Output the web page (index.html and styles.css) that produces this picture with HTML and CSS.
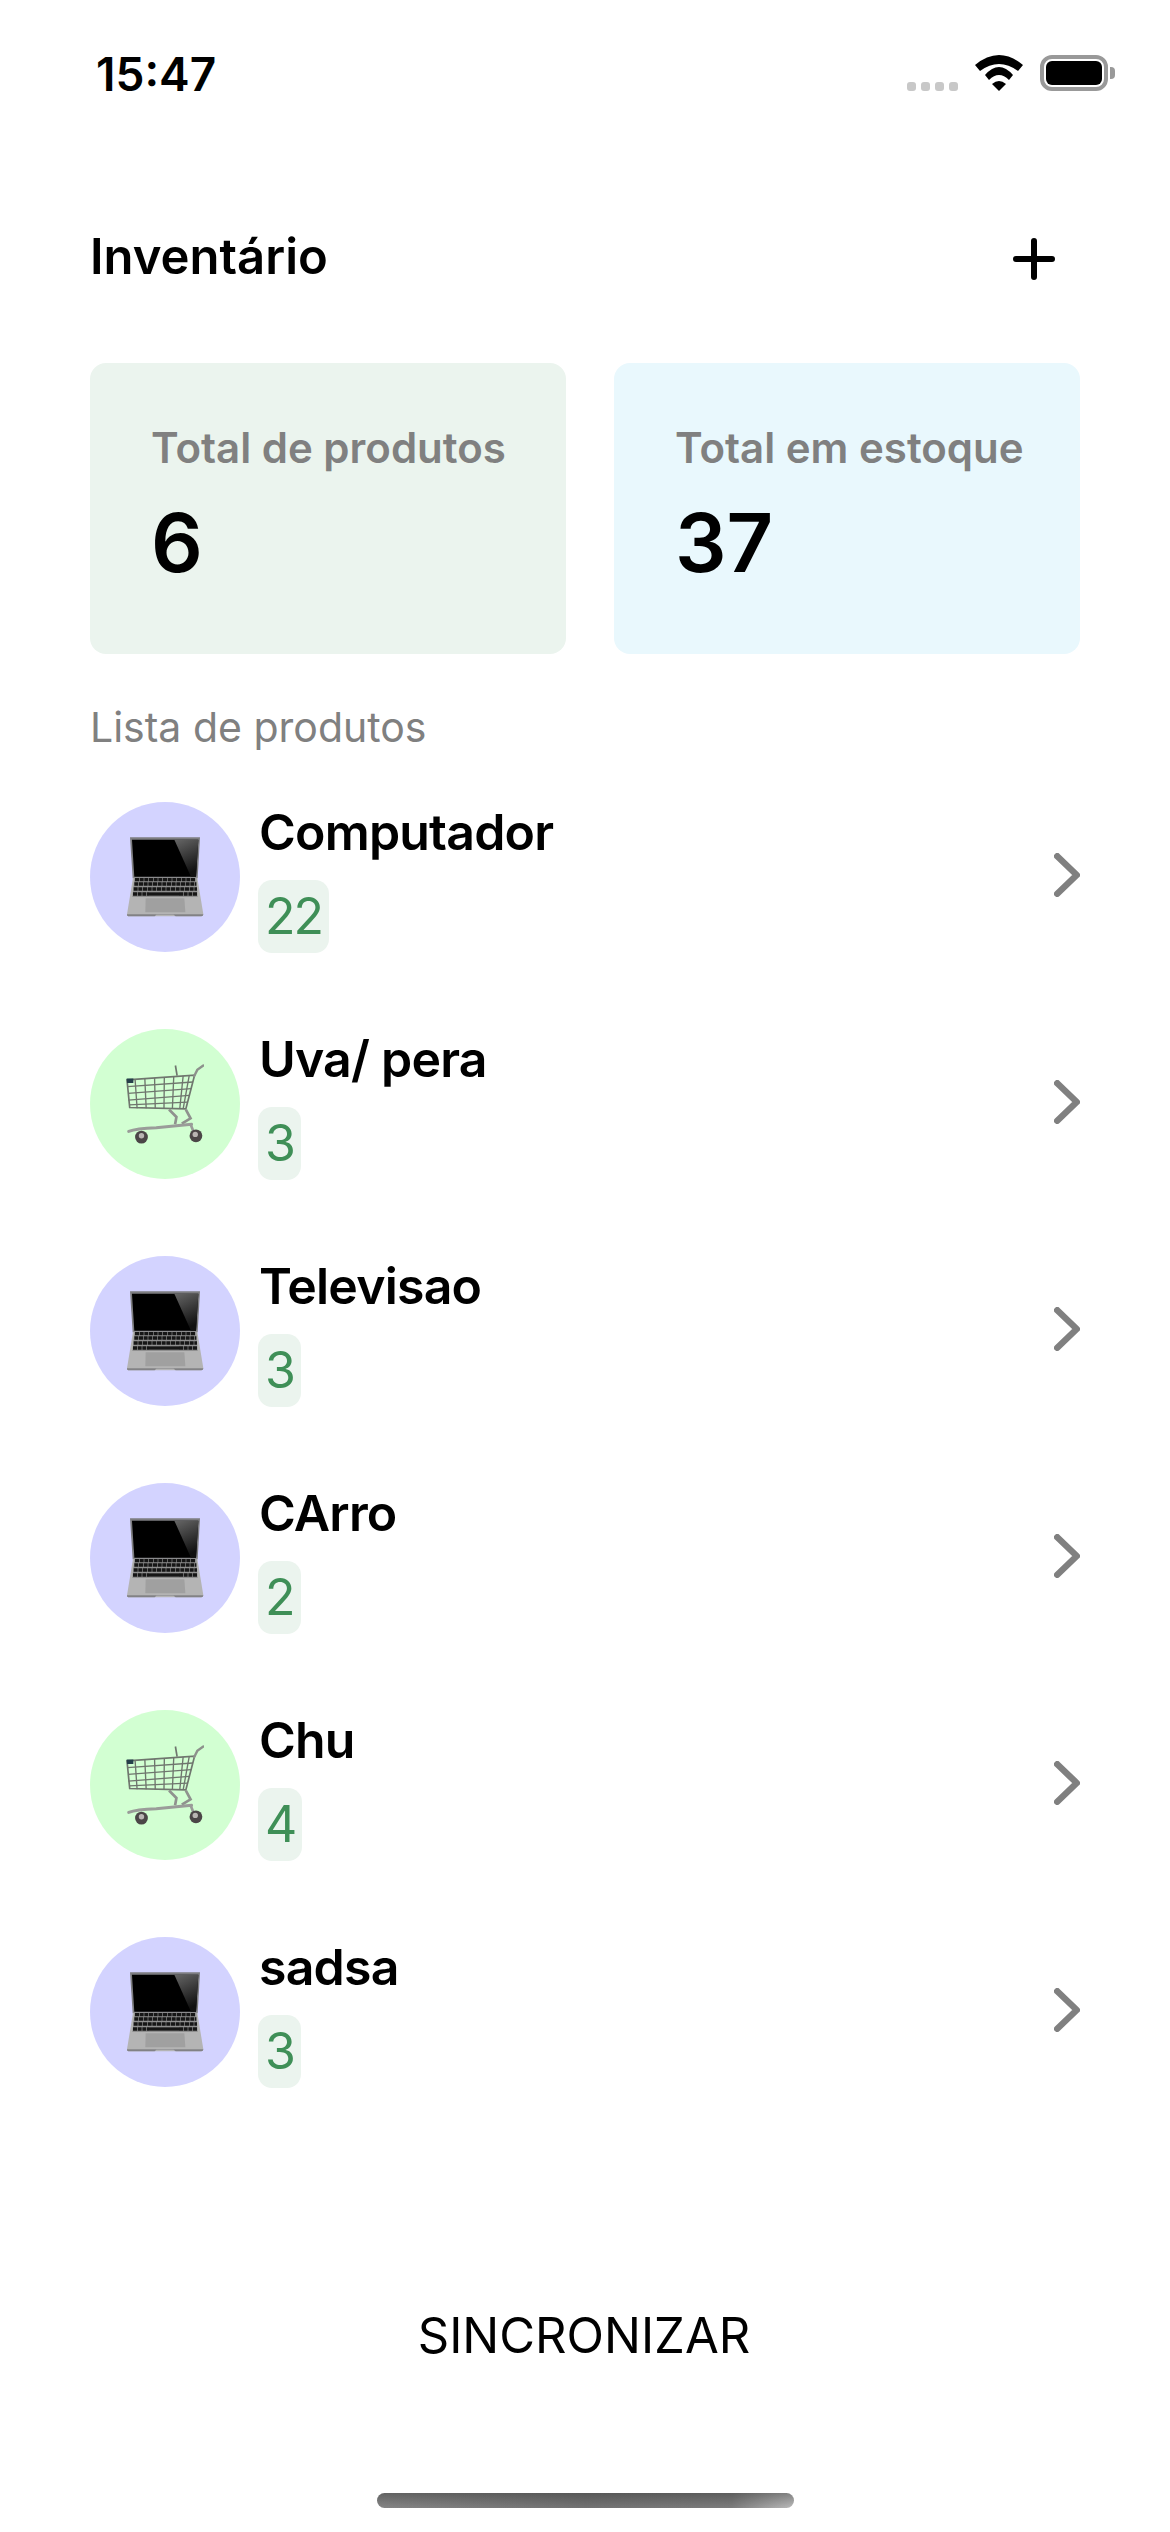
FILE: index.html
```html
<!DOCTYPE html>
<html lang="pt">
<head>
  <meta charset="UTF-8">
  <meta name="viewport" content="width=device-width, initial-scale=1.0">
  <title>Inventário</title>
  <link rel="stylesheet" href="styles.css">
</head>
<body>
  <!-- desenhos reutilizados nas linhas -->
  <svg class="defs" aria-hidden="true">
    <defs>
      <linearGradient id="glare" x1="0" y1="0" x2="0.3" y2="1">
        <stop offset="0" stop-color="#666"/>
        <stop offset="1" stop-color="#111"/>
      </linearGradient>
      <symbol id="laptop" viewBox="0 0 232 240">
        <path d="M11 1H221L214 124H19Z" fill="#7d7d80"/>
        <path d="M17 8H216L209 119H24Z" fill="#000"/>
        <path d="M144 8H216L209 119H194Z" fill="url(#glare)"/>
        <path d="M20 122H213L231 232Q231 238 225 238H9Q1 238 2 232Z" fill="#b4b4b4"/>
        <path d="M2 232Q1 238 9 238H85L90 233H142L148 238H225Q231 238 231 232Z" fill="#828285"/>
        <path d="M24 122H210L214 180H18Z" fill="#8f8f8f"/>
        <path d="M26 128H208M24 141H210M22 156H212" fill="none" stroke="#161616" stroke-width="10" stroke-dasharray="12 2"/>
        <path d="M20 171H68M158 171H214" fill="none" stroke="#161616" stroke-width="10" stroke-dasharray="12 2"/>
        <path d="M68 171H158" fill="none" stroke="#161616" stroke-width="10"/>
        <path d="M58 184H174L177 226H57Z" fill="#a0a0a0"/>
      </symbol>
      <symbol id="cart" viewBox="0 0 232 235">
        <g fill="none" stroke="#6f766e" stroke-width="4">
          <path d="M3 46L204 32L178 132L11 128Z" stroke-width="5"/>
          <path d="M4 66L199 52M6 86L194 72M7 106L188 92M9 120L183 112"/>
          <path d="M27 44L33 130M56 42L60 130M85 40L87 130M114 38L113 131M142 36L138 131M170 34L160 131M188 33L170 132"/>
          <path d="M203 34L212 16L230 3" stroke="#8d918c" stroke-width="7" stroke-linecap="round"/>
          <path d="M147 3L152 33" stroke-width="5"/>
          <path d="M128 134L150 156L146 178M178 134L192 160L166 176" stroke="#8f928e" stroke-width="8"/>
          <path d="M8 199Q30 190 90 188L195 178" stroke="#9a9c99" stroke-width="9" stroke-linecap="round"/>
          <path d="M192 178L200 198" stroke="#9a9c99" stroke-width="8"/>
        </g>
        <path d="M2 42H22V55H3Z" fill="#25404a"/>
        <circle cx="46" cy="216" r="19" fill="#4b4647"/>
        <circle cx="46" cy="212" r="8" fill="#b9b5b3"/>
        <circle cx="208" cy="212" r="19" fill="#4b4647"/>
        <circle cx="206" cy="208" r="8" fill="#b9b5b3"/>
      </symbol>
    </defs>
  </svg>

  <div class="page">
    <!-- barra de status -->
    <div class="status-bar">
      <span class="time">15:47</span>
      <div class="status-icons">
        <div class="signal"><i></i><i></i><i></i><i></i></div>
        <svg class="wifi" width="48" height="36" viewBox="0 0 48 36">
          <path d="M0 10Q24 -10 48 10L43 16Q24 2 5 16Z" fill="#000"/>
          <path d="M10 20Q24 4 38 20L34 25Q24 15 14 25Z" fill="#000"/>
          <path d="M17 29Q24 23 31 29L24 36Z" fill="#000"/>
        </svg>
        <div class="battery"><div class="battery-level"></div></div>
        <div class="battery-cap"></div>
      </div>
    </div>

    <!-- cabeçalho -->
    <header class="header">
      <h1 class="title">Inventário</h1>
      <svg class="plus" width="42" height="42" viewBox="0 0 42 42">
        <path d="M21 3V39M3 21H39" stroke="#000" stroke-width="6" stroke-linecap="round"/>
      </svg>
    </header>

    <!-- totais -->
    <section class="totals">
      <div class="card card-green">
        <span class="card-label">Total de produtos</span>
        <span class="card-value">6</span>
      </div>
      <div class="card card-blue">
        <span class="card-label">Total em estoque</span>
        <span class="card-value">37</span>
      </div>
    </section>

    <h2 class="list-title">Lista de produtos</h2>

    <!-- lista de produtos -->
    <ul class="product-list">
      <li class="product">
        <div class="avatar avatar-purple"><svg class="emoji"><use href="#laptop"/></svg></div>
        <div class="info">
          <span class="name">Computador</span>
          <span class="badge">22</span>
        </div>
        <svg class="chevron" width="26" height="44" viewBox="0 0 26 44"><path d="M3.250 3.250L22.750 22L3.250 40.750" fill="none" stroke="#808080" stroke-width="6.500" stroke-linecap="round" stroke-linejoin="round"/></svg>
      </li>
      <li class="product">
        <div class="avatar avatar-green"><svg class="emoji"><use href="#cart"/></svg></div>
        <div class="info">
          <span class="name">Uva/ pera</span>
          <span class="badge">3</span>
        </div>
        <svg class="chevron" width="26" height="44" viewBox="0 0 26 44"><path d="M3.250 3.250L22.750 22L3.250 40.750" fill="none" stroke="#808080" stroke-width="6.500" stroke-linecap="round" stroke-linejoin="round"/></svg>
      </li>
      <li class="product">
        <div class="avatar avatar-purple"><svg class="emoji"><use href="#laptop"/></svg></div>
        <div class="info">
          <span class="name">Televisao</span>
          <span class="badge">3</span>
        </div>
        <svg class="chevron" width="26" height="44" viewBox="0 0 26 44"><path d="M3.250 3.250L22.750 22L3.250 40.750" fill="none" stroke="#808080" stroke-width="6.500" stroke-linecap="round" stroke-linejoin="round"/></svg>
      </li>
      <li class="product">
        <div class="avatar avatar-purple"><svg class="emoji"><use href="#laptop"/></svg></div>
        <div class="info">
          <span class="name">CArro</span>
          <span class="badge">2</span>
        </div>
        <svg class="chevron" width="26" height="44" viewBox="0 0 26 44"><path d="M3.250 3.250L22.750 22L3.250 40.750" fill="none" stroke="#808080" stroke-width="6.500" stroke-linecap="round" stroke-linejoin="round"/></svg>
      </li>
      <li class="product">
        <div class="avatar avatar-green"><svg class="emoji"><use href="#cart"/></svg></div>
        <div class="info">
          <span class="name">Chu</span>
          <span class="badge">4</span>
        </div>
        <svg class="chevron" width="26" height="44" viewBox="0 0 26 44"><path d="M3.250 3.250L22.750 22L3.250 40.750" fill="none" stroke="#808080" stroke-width="6.500" stroke-linecap="round" stroke-linejoin="round"/></svg>
      </li>
      <li class="product">
        <div class="avatar avatar-purple"><svg class="emoji"><use href="#laptop"/></svg></div>
        <div class="info">
          <span class="name">sadsa</span>
          <span class="badge">3</span>
        </div>
        <svg class="chevron" width="26" height="44" viewBox="0 0 26 44"><path d="M3.250 3.250L22.750 22L3.250 40.750" fill="none" stroke="#808080" stroke-width="6.500" stroke-linecap="round" stroke-linejoin="round"/></svg>
      </li>
    </ul>

    <!-- rodapé -->
    <footer class="footer">
      <button class="sync">SINCRONIZAR</button>
      <div class="home-bar"></div>
    </footer>
  </div>
</body>
</html>
```

FILE: styles.css
```css
/* Reset */
* {
  margin: 0;
  padding: 0;
  box-sizing: border-box;
}
body {
  font-family: Inter, "Liberation Sans", sans-serif;
  background: #fff;
  color: #000;
}
.defs {
  display: block;
  width: 0;
  height: 0;
}
.page {
  display: flex;
  flex-direction: column;
  height: 2532px;
  padding: 0 90px;
}
/* Barra de status */
.status-bar {
  display: flex;
  justify-content: space-between;
  align-items: flex-start;
  height: 206px;
  margin-right: -35px;
  padding-top: 47px;
}
.time {
  margin-left: 6px;
  font-size: 46px;
  line-height: 54px;
  font-weight: 600;
}
.status-icons {
  display: flex;
  align-items: center;
  margin-top: 8px;
}
.signal {
  display: flex;
  gap: 5px;
  align-self: flex-end;
  margin-right: 17px;
}
.signal i {
  width: 9px;
  height: 9px;
  border-radius: 3px;
  background: #c8c8c8;
}
.wifi {
  margin-right: 17px;
}
.battery {
  width: 68px;
  height: 36px;
  padding: 2px;
  border: 4px solid #999;
  border-radius: 12px;
}
.battery-level {
  height: 100%;
  border-radius: 6px;
  background: #000;
}
.battery-cap {
  width: 5px;
  height: 12px;
  margin-left: 2px;
  border-radius: 0 4px 4px 0;
  background: #999;
}
/* Cabeçalho */
.header {
  display: flex;
  justify-content: space-between;
  align-items: center;
  height: 106px;
  margin-bottom: 51px;
}
.title {
  margin-top: -6px;
  font-size: 49px;
  font-weight: 600;
}
.plus {
  margin-right: 25px;
}
/* Totais */
.totals {
  display: flex;
  gap: 48px;
  height: 291px;
}
.card {
  display: flex;
  flex-direction: column;
  border-radius: 16px;
  padding: 60px 20px 0 61px;
}
.card-green {
  width: 476px;
  background: #ebf4ee;
}
.card-blue {
  flex: 1;
  background: #e9f8fd;
}
.card-label {
  font-size: 42px;
  line-height: 50px;
  font-weight: 600;
  color: #808080;
}
.card-value {
  margin-top: 20px;
  font-size: 81px;
  line-height: 100px;
  font-weight: 600;
}
.list-title {
  margin-top: 48px;
  font-size: 41px;
  line-height: 50px;
  font-weight: 400;
  color: #808080;
}
/* Lista de produtos */
.product-list {
  display: flex;
  flex-direction: column;
  gap: 76px;
  margin-top: 50px;
  list-style: none;
}
.product {
  display: flex;
  align-items: flex-start;
  height: 151px;
}
.avatar {
  display: flex;
  justify-content: center;
  align-items: center;
  flex: none;
  width: 150px;
  height: 150px;
  border-radius: 50%;
}
.avatar-purple {
  background: #d3d3ff;
}
.avatar-green {
  background: #d2ffd2;
}
.emoji {
  width: 78px;
  height: 80px;
}
.info {
  display: flex;
  flex-direction: column;
  align-items: flex-start;
  margin-left: 18px;
}
.name {
  margin-left: 1px;
  font-size: 50px;
  line-height: 60px;
  font-weight: 600;
  letter-spacing: -0.8px;
}
.badge {
  margin-top: 18px;
  padding: 0 7px;
  border-radius: 14px;
  background: #ebf4ee;
  color: #3f8f57;
  font-size: 50px;
  line-height: 73px;
  letter-spacing: -2px;
}
.chevron {
  margin-left: auto;
  margin-top: 51px;
}
/* Rodapé */
.footer {
  display: flex;
  flex-direction: column;
  align-items: center;
  margin-top: auto;
}
.sync {
  margin-right: 2px;
  border: none;
  background: none;
  font-family: inherit;
  font-size: 49px;
  line-height: 60px;
  color: #000;
}
.home-bar {
  width: 417px;
  height: 15px;
  margin-top: 127px;
  margin-bottom: 24px;
  border-radius: 8px;
  background: linear-gradient(to bottom, rgba(85, 85, 85, 0.5), rgba(255, 255, 255, 0.15)), linear-gradient(to right, #707070, #5a5a5a 50%, #666 85%, #b0b0b0);
}
```
